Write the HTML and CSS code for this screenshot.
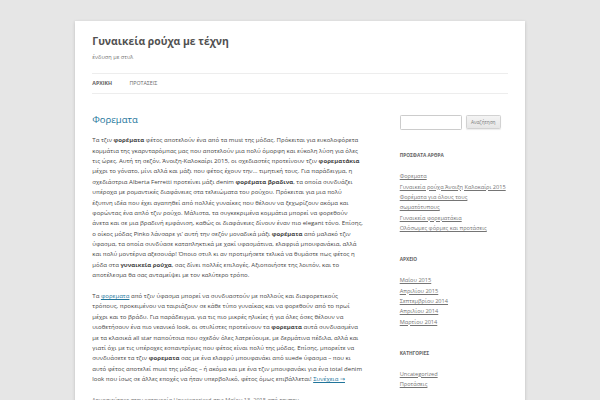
FILE: index.html
```html
<!DOCTYPE html>
<html lang="el">
<head>
  <meta charset="UTF-8" />
  <meta name="viewport" content="width=device-width, initial-scale=1.0" />
  <title>Γυναικεία ρούχα με τέχνη</title>
  <link rel="stylesheet" href="styles.css">
</head>
<body>

  <div class="site">
    <header class="site-header">
      <h1 class="site-title"><a href="#">Γυναικεία ρούχα με τέχνη</a></h1>
      <h2 class="site-description">ένδυση με στυλ</h2>

      <nav class="main-navigation">
        <ul class="nav-menu">
          <li class="current"><a href="#">Αρχική</a></li>
          <li><a href="#">Προτάσεις</a></li>
        </ul>
      </nav>
    </header>

    <div class="site-main">
      <main class="site-content">
        <article class="post">
          <header class="entry-header">
            <h1 class="entry-title"><a href="#">Φορεματα</a></h1>
          </header>

          <div class="entry-content">
            <p>Τα τζιν <strong>φορέματα</strong> φέτος αποτελούν ένα από τα must της μόδας. Πρόκειται για ευκολοφόρετα κομμάτια της γκαρνταρόμπας μας που αποτελούν μια πολύ όμορφη και εύκολη λύση για όλες τις ώρες. Αυτή τη σεζόν, Άνοιξη-Καλοκαίρι 2015, οι σχεδιαστές προτείνουν τζιν <strong>φορεματάκια</strong> μέχρι το γόνατο, μίνι αλλά και μάξι που φέτος έχουν την… τιμητική τους. Για παράδειγμα, η σχεδιάστρια Alberta Ferretti προτείνει μάξι denim <strong>φορέματα βραδινα</strong>, τα οποία συνδυάζει υπέροχα με ρομαντικές διαφάνειες στα τελειώματα του ρούχου. Πρόκειται για μια πολύ έξυπνη ιδέα που έχει αγαπηθεί από πολλές γυναίκες που θέλουν να ξεχωρίζουν ακόμα και φορώντας ένα απλό τζιν ρούχο. Μάλιστα, τα συγκεκριμένα κομμάτια μπορεί να φορεθούν άνετα και σε μια βραδινή εμφάνιση, καθώς οι διαφάνειες δίνουν έναν πιο elegant τόνο. Επίσης, ο οίκος μόδας Pinko λάνσαρε γι’ αυτή την σεζόν μοναδικά μάξι <strong>φορέματα</strong> από μαλακό τζιν ύφασμα, τα οποία συνδύασε καταπληκτικά με χακί υφασμάτινα, ελαφριά μπουφανάκια, αλλά και πολύ μοντέρνα αξεσουάρ! Όποιο στυλ κι αν προτιμήσετε τελικά να θυμάστε πως φέτος η μόδα στα <strong>γυναικεία ρούχα</strong>, σας δίνει πολλές επιλογές. Αξιοποιήστε της λοιπόν, και το αποτέλεσμα θα σας ανταμείψει με τον καλύτερο τρόπο.</p>

            <p>Τα <a href="#">φορεματα</a> από τζιν ύφασμα μπορεί να συνδυαστούν με πολλούς και διαφορετικούς τρόπους, προκειμένου να ταιριάζουν σε κάθε τύπο γυναίκας και να φορεθούν από το πρωί μέχρι και το βράδυ. Για παράδειγμα, για τις πιο μικρές ηλικίες ή για όλες όσες θέλουν να υιοθετήσουν ένα πιο νεανικό look, οι στυλίστες προτείνουν τα <strong>φορεματα</strong> αυτά συνδυασμένα με τα κλασικά all star παπούτσια που σχεδόν όλες λατρεύουμε, με δερμάτινα πέδιλα, αλλά και γιατί όχι με τις υπέροχες εσπαντρίγιες που φέτος είναι πολύ της μόδας. Επίσης, μπορείτε να συνδυάσετε τα τζιν <strong>φορεματα</strong> σας με ένα ελαφρύ μπουφανάκι από suede ύφασμα – που κι αυτό φέτος αποτελεί must της μόδας – ή ακόμα και με ένα τζιν μπουφανάκι για ένα total denim look που ίσως σε άλλες εποχές να ήταν υπερβολικό, φέτος όμως επιβάλλεται! <a href="#" class="more-link">Συνέχεια →</a></p>
          </div>

          <footer class="entry-meta">
            Δημοσιεύτηκε στην κατηγορία <a href="#">Uncategorized</a> στις <a href="#">Μαΐου 13, 2015</a> από <a href="#">τηνπην</a>.
          </footer>
        </article>
      </main>

      <aside class="widget-area">
        <div class="widget widget-search">
          <form class="searchform">
            <input type="text" class="search-field">
            <input type="submit" class="search-submit" value="Αναζήτηση">
          </form>
        </div>

        <div class="widget">
          <h3 class="widget-title">Πρόσφατα άρθρα</h3>
          <ul>
            <li><a href="#">Φορεματα</a></li>
            <li><a href="#">Γυναικεία ρούχα Άνοιξη Καλοκαίρι 2015</a></li>
            <li><a href="#">Φορέματα για όλους τους σωματότυπους</a></li>
            <li><a href="#">Γυναικεία φορεματάκια</a></li>
            <li><a href="#">Ολόσωμες φόρμες και προτάσεις</a></li>
          </ul>
        </div>

        <div class="widget">
          <h3 class="widget-title">Αρχείο</h3>
          <ul>
            <li><a href="#">Μαΐου 2015</a></li>
            <li><a href="#">Απριλίου 2015</a></li>
            <li><a href="#">Σεπτεμβρίου 2014</a></li>
            <li><a href="#">Απριλίου 2014</a></li>
            <li><a href="#">Μαρτίου 2014</a></li>
          </ul>
        </div>

        <div class="widget">
          <h3 class="widget-title">Κατηγορίες</h3>
          <ul>
            <li><a href="#">Uncategorized</a></li>
            <li><a href="#">Προτάσεις</a></li>
          </ul>
        </div>
      </aside>
    </div>
  </div>

</body>
</html>
```

FILE: styles.css
```css
/* Reset */
* {
  margin: 0;
  padding: 0;
  box-sizing: border-box;
}

body {
  background: #e6e6e6;
  font-family: 'Open Sans', 'DejaVu Sans', sans-serif;
  font-size: 6.06px;
  line-height: 10.38px;
  color: #444;
}

a {
  color: #21759b;
}

ul {
  list-style: none;
}

/* Page box */
.site {
  width: 450px;
  margin: 21px auto;
  padding: 0 17.3px;
  background: #fff;
  box-shadow: 0 1px 3px rgba(100, 100, 100, 0.3);
}

/* Header */
.site-header {
  padding: 10.4px 0;
}

.site-title {
  font-size: 10.4px;
  line-height: 20.8px;
  font-weight: bold;
}

.site-title a {
  color: #515151;
  text-decoration: none;
}

.site-description {
  font-size: 5.63px;
  line-height: 10.4px;
  font-weight: normal;
  color: #757575;
}

.main-navigation {
  margin-top: 10.4px;
}

.nav-menu {
  display: flex;
  border-top: 1px solid #ededed;
  border-bottom: 1px solid #ededed;
}

.nav-menu li {
  margin-right: 17.3px;
  font-size: 5.3px;
  line-height: 18.8px;
}

.nav-menu a {
  color: #6a6a6a;
  text-decoration: none;
  text-transform: uppercase;
}

.nav-menu .current a {
  color: #636363;
  font-weight: bold;
}

/* Main columns */
.site-main {
  display: flex;
  justify-content: space-between;
  align-items: flex-start;
}

.site-content {
  width: 270.8px;
  margin-top: 10.4px;
}

.entry-header {
  margin-bottom: 10.4px;
}

.entry-title {
  font-size: 9.5px;
  line-height: 10.4px;
  font-weight: normal;
}

.entry-title a {
  text-decoration: none;
}

.entry-content p {
  margin-bottom: 10.4px;
}

.entry-meta {
  font-size: 5.63px;
  line-height: 10.4px;
  color: #757575;
}

.entry-meta a {
  color: #757575;
  text-decoration: none;
}

/* Sidebar */
.widget-area {
  width: 108px;
  margin-top: 10.4px;
}

.widget {
  margin-bottom: 20.8px;
}

.widget-title {
  font-size: 4.76px;
  line-height: 10.4px;
  font-weight: bold;
  text-transform: uppercase;
  color: #636363;
  margin-bottom: 10.4px;
}

.widget li {
  font-size: 5.63px;
  line-height: 10.4px;
}

.widget a {
  color: #757575;
}

.searchform {
  display: flex;
  gap: 4px;
  align-items: center;
}

.search-field {
  width: 62px;
  height: 15px;
  padding: 2.6px;
  border: 1px solid #ccc;
  border-radius: 1.3px;
  font-family: inherit;
  font-size: 5.63px;
}

.search-submit {
  width: 35px;
  height: 14px;
  padding: 0 4px;
  font-family: inherit;
  font-size: 4.76px;
  color: #7c7c7c;
  background: linear-gradient(to bottom, #f4f4f4, #e6e6e6);
  border: 1px solid #d2d2d2;
  border-radius: 1.3px;
  box-shadow: 0 1px 1px rgba(64, 64, 64, 0.1);
}
```
